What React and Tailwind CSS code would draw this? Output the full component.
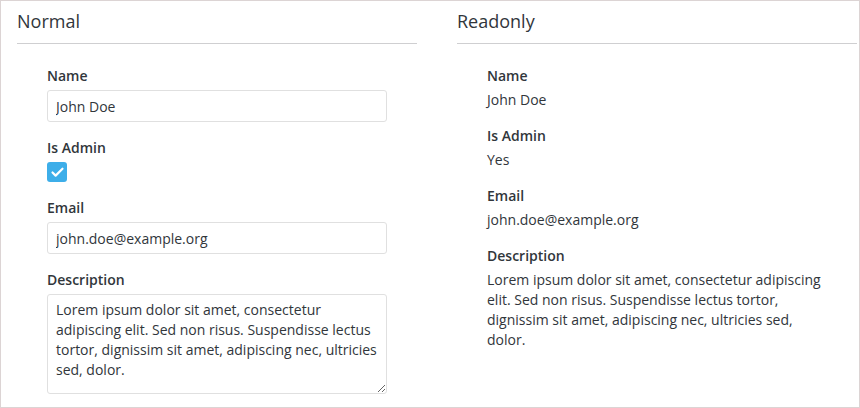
import { Check } from 'lucide-react'

const desc =
  'Lorem ipsum dolor sit amet, consectetur adipiscing elit. Sed non risus. Suspendisse lectus tortor, dignissim sit amet, adipiscing nec, ultricies sed, dolor.'

const Label = ({ children }) => (
  <div className="text-sm leading-5 font-semibold text-[#31363b]">{children}</div>
)

const Section = ({ title, children }) => (
  <div>
    <h2 className="pt-[7px] pb-[9px] text-lg leading-[26px] text-[#31363b] border-b border-[#cfcfd1]">
      {title}
    </h2>
    <div className="pl-[30px] pt-[22px] w-[370px] flex flex-col gap-4">{children}</div>
  </div>
)

const App = () => {
  return (
    <div
      className="w-[860px] h-[408px] bg-white border border-[#dcd4d4] pl-4 overflow-hidden"
      style={{ fontFamily: '"Open Sans", sans-serif' }}
    >
      <div className="grid grid-cols-[400px_400px] gap-10">
        {/* Normal */}
        <Section title="Normal">
          <div className="flex flex-col gap-1">
            <Label>Name</Label>
            <input
              defaultValue="John Doe"
              className="h-8 px-2 border border-[#e0e0e0] rounded-[3px] text-sm text-[#31363b] outline-none"
            />
          </div>
          <div className="flex flex-col gap-1">
            <Label>Is Admin</Label>
            <div className="w-5 h-5 rounded-[3px] bg-[#3daee9] flex items-center justify-center">
              <Check className="w-[15px] h-[15px] text-white" strokeWidth={3.5} />
            </div>
          </div>
          <div className="flex flex-col gap-1">
            <Label>Email</Label>
            <input
              defaultValue="john.doe@example.org"
              className="h-8 px-2 border border-[#e0e0e0] rounded-[3px] text-sm text-[#31363b] outline-none"
            />
          </div>
          <div className="flex flex-col gap-1">
            <Label>Description</Label>
            <textarea
              defaultValue={desc}
              className="h-[100px] px-2 py-[5px] border border-[#e0e0e0] rounded-[3px] text-sm leading-5 text-[#31363b] outline-none"
            />
          </div>
        </Section>

        {/* Readonly */}
        <Section title="Readonly">
          <div className="flex flex-col gap-1">
            <Label>Name</Label>
            <div className="text-sm leading-5 text-[#31363b]">John Doe</div>
          </div>
          <div className="flex flex-col gap-1">
            <Label>Is Admin</Label>
            <div className="text-sm leading-5 text-[#31363b]">Yes</div>
          </div>
          <div className="flex flex-col gap-1">
            <Label>Email</Label>
            <div className="text-sm leading-5 text-[#31363b]">john.doe@example.org</div>
          </div>
          <div className="flex flex-col gap-1">
            <Label>Description</Label>
            <div className="text-sm leading-5 text-[#31363b] w-[340px]">{desc}</div>
          </div>
        </Section>
      </div>
    </div>
  )
}

export default App
